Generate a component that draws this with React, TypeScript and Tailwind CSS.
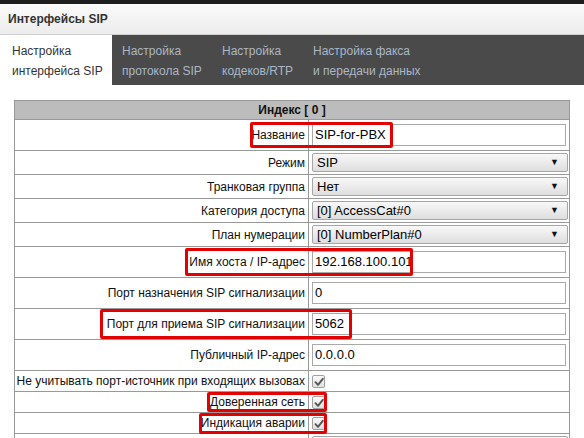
import React from 'react';

type Row =
  | { label: string; kind: 'input'; value: string }
  | { label: string; kind: 'select'; value: string }
  | { label: string; kind: 'check' };

const rows: Row[] = [
  { label: 'Название', kind: 'input', value: 'SIP-for-PBX' },
  { label: 'Режим', kind: 'select', value: 'SIP' },
  { label: 'Транковая группа', kind: 'select', value: 'Нет' },
  { label: 'Категория доступа', kind: 'select', value: '[0] AccessCat#0' },
  { label: 'План нумерации', kind: 'select', value: '[0] NumberPlan#0' },
  { label: 'Имя хоста / IP-адрес', kind: 'input', value: '192.168.100.101' },
  { label: 'Порт назначения SIP сигнализации', kind: 'input', value: '0' },
  { label: 'Порт для приема SIP сигнализации', kind: 'input', value: '5062' },
  { label: 'Публичный IP-адрес', kind: 'input', value: '0.0.0.0' },
  { label: 'Не учитывать порт-источник при входящих вызовах', kind: 'check' },
  { label: 'Доверенная сеть', kind: 'check' },
  { label: 'Индикация аварии', kind: 'check' },
  { label: '', kind: 'select', value: '' },
];

function Check() {
  return (
    <span className="inline-flex w-[13px] h-[13px] items-center justify-center rounded-[2px] border border-[#a0a0a0] bg-gradient-to-b from-[#fafafa] to-[#e0e0e0] align-middle">
      <svg width="10" height="10" viewBox="0 0 10 10">
        <path d="M1.5 5.2 L4 7.8 L8.8 1.8" fill="none" stroke="#555" strokeWidth="1.9" strokeLinecap="round" strokeLinejoin="round" />
      </svg>
    </span>
  );
}

function Value({ row }: { row: Row }) {
  if (row.kind === 'input') {
    return (
      <div className="h-[22px] w-[254px] border border-[#a9a9a9] bg-white px-[2px] text-[13px] leading-[20px] text-black">
        {row.value}
      </div>
    );
  }
  if (row.kind === 'select') {
    return (
      <div className="flex h-[19px] w-[256px] items-center justify-between rounded-[2px] border border-[#a6a6a6] bg-gradient-to-b from-[#f8f8f8] to-[#dedede] pl-[4px] pr-[8px] text-[13px] text-black">
        <span>{row.value}</span>
        {row.value && <span className="text-[9px] text-[#111]">▼</span>}
      </div>
    );
  }
  return <Check />;
}

function rowHeight(row: Row) {
  if (row.kind === 'input') return 'h-[31px]';
  if (row.kind === 'select') return 'h-[24px]';
  return 'h-[21px]';
}

export default function App() {
  return (
    <div className="relative h-[438px] w-[584px] overflow-hidden bg-white font-['Liberation_Sans',Arial,sans-serif] text-[12px] text-[#111]">
      <div className="h-[4px] bg-[#1e1e1e]" />
      <div className="flex h-[31px] items-center border-b border-[#d0d0d0] bg-gradient-to-b from-[#fbfbfb] to-[#ececec] pl-[8px] text-[12px] font-bold text-[#333]">
        Интерфейсы SIP
      </div>
      <div className="flex h-[50px] bg-[#4a4a4a] text-[12px] leading-[20px]">
        <div className="w-[112px] bg-white pl-[12px] pt-[6px] text-[#333]">
          Настройка
          <br />
          интерфейса SIP
        </div>
        <div className="w-[100px] pl-[10px] pt-[6px] text-[#a9b7c6]">
          Настройка
          <br />
          протокола SIP
        </div>
        <div className="w-[91px] pl-[10px] pt-[6px] text-[#a9b7c6]">
          Настройка
          <br />
          кодеков/RTP
        </div>
        <div className="pl-[10px] pt-[6px] text-[#a9b7c6]">
          Настройка факса
          <br />
          и передачи данных
        </div>
      </div>

      <div className="pl-[14px] pt-[15px]">
        <table className="w-[556px] table-fixed border-collapse">
          <colgroup>
            <col className="w-[294px]" />
            <col />
          </colgroup>
          <tbody>
            <tr className="h-[19px]">
              <th colSpan={2} className="border border-[#999] bg-[#bcbcbc] p-0 text-center text-[12px] font-bold text-[#111]">
                Индекс [ 0 ]
              </th>
            </tr>
            {rows.map((row, i) => (
              <tr key={i} className={rowHeight(row)}>
                <td className="border border-[#999] p-0 pr-[3px] text-right align-middle whitespace-nowrap">
                  {row.label}
                </td>
                <td className="border border-[#999] p-0 pl-[3px] align-middle">
                  <Value row={row} />
                </td>
              </tr>
            ))}
          </tbody>
        </table>
      </div>

      <div className="absolute left-[250px] top-[122px] h-[26px] w-[143px] rounded-[2px] border-[3px] border-[#e30000]" />
      <div className="absolute left-[185px] top-[248px] h-[28px] w-[228px] rounded-[2px] border-[3px] border-[#e30000]" />
      <div className="absolute left-[100px] top-[309px] h-[30px] w-[252px] rounded-[2px] border-[3px] border-[#e30000]" />
      <div className="absolute left-[207px] top-[392px] h-[20px] w-[120px] rounded-[2px] border-[3px] border-[#e30000]" />
      <div className="absolute left-[199px] top-[413px] h-[21px] w-[128px] rounded-[2px] border-[3px] border-[#e30000]" />
    </div>
  );
}
